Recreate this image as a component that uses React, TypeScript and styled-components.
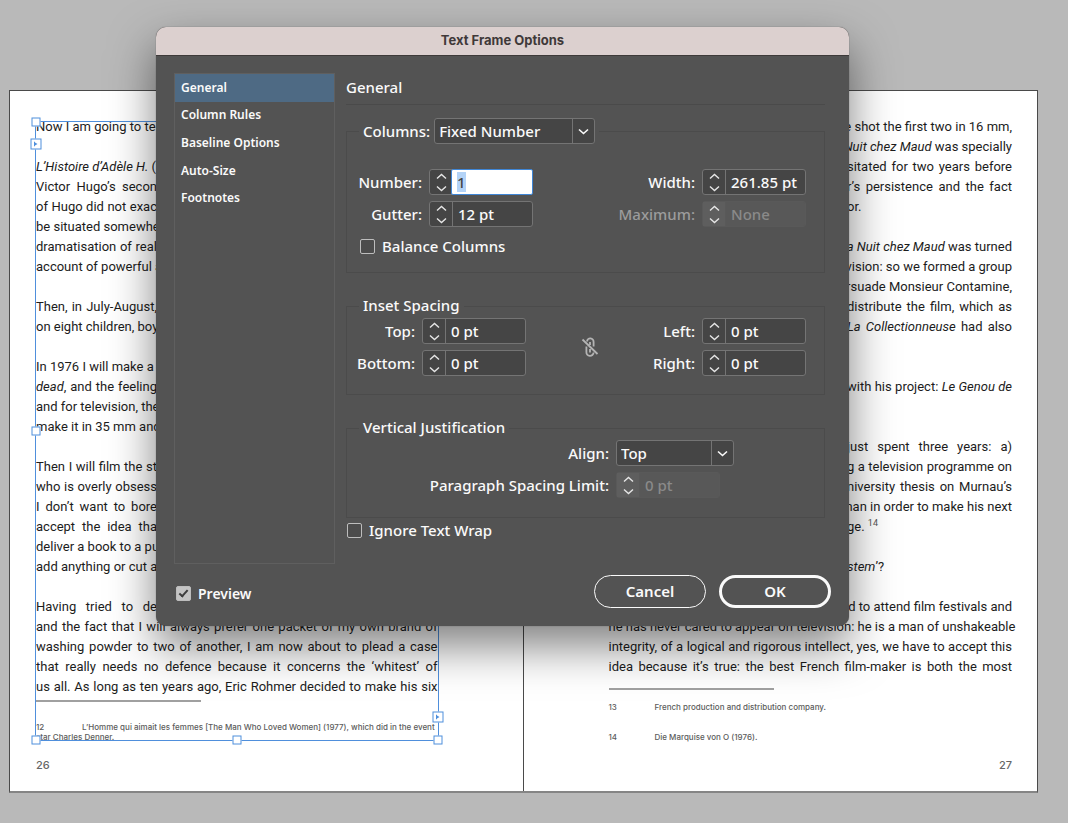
import React, { useEffect, useRef, useState } from "react";
import styled, { createGlobalStyle, css } from "styled-components";

const GlobalStyle = createGlobalStyle`
  *, *::before, *::after { box-sizing: border-box; }
  html, body, #root { min-height: 100vh; }
  body { margin: 0; background: #b9b9b9; }
  button, input, select { font: inherit; color: inherit; margin: 0; }
`;

const storyFont = `Roboto, sans-serif`;
const uiFont = `"Noto Sans", "Open Sans", sans-serif`;

/* ---------- document ---------- */

const Desk = styled.main`
  position: relative;
  min-height: 100vh;
  padding: 90px 30px 30px 9px;
`;

const Spread = styled.div`
  display: grid;
  grid-template-columns: minmax(0, 1fr) minmax(0, 1fr);
  min-height: 703px;
  background: #fff;
  border: 1px solid #4a4a4a;
  border-bottom: 2px solid #858585;
  font-family: ${storyFont};
  color: #1c1c1c;
`;

const Page = styled.article<{ $right?: boolean }>`
  display: flex;
  flex-direction: column;
  padding: ${(p) => (p.$right ? "26px 25px 18px 85px" : "26px 85px 18px 26px")};
  border-right: ${(p) => (p.$right ? "0" : "1px solid #4a4a4a")};
`;

const Frame = styled.div`
  position: relative;
  height: 623px;
`;

const Line = styled.p<{ $part?: "start" | "end"; $loose?: boolean }>`
  height: 20px;
  margin: 0;
  font-size: 13px;
  line-height: 20px;
  white-space: nowrap;
  text-align: left;
  text-align-last: ${(p) => (p.$loose ? "left" : "justify")};
  ${(p) => p.$part === "start" && css`width: 121px;`}
  ${(p) => p.$part === "end" && css`width: max-content; min-width: 165px; margin-left: auto;`}
`;

const NoteMark = styled.sup`
  font-size: 9px;
  line-height: 9px;
  color: #555;
`;

const NoteRule = styled.hr<{ $late?: boolean }>`
  width: 165px;
  height: 2px;
  margin: ${(p) => (p.$late ? "3px 0 20px" : "11px 0 12px")};
  border: 0;
  background: #a0a0a0;
`;

const Note = styled.p<{ $spaced?: boolean }>`
  margin: 0 0 ${(p) => (p.$spaced ? "20px" : "0")};
  font-family: Inter, sans-serif;
  font-size: 8px;
  font-weight: 500;
  line-height: 10px;
  color: #5c5c5c;
  white-space: nowrap;
`;

const NoteNumber = styled.span`
  display: inline-block;
  width: 46px;
`;

const Folio = styled.footer<{ $right?: boolean }>`
  margin-top: auto;
  font-family: Inter, sans-serif;
  font-size: 11px;
  font-weight: 500;
  line-height: 16px;
  color: #666;
  text-align: ${(p) => (p.$right ? "right" : "left")};
`;

const Selection = styled.div`
  position: absolute;
  inset: 4px -1px -1px -1px;
  border: 1px solid #4f8fdc;
  pointer-events: none;
`;

const Handle = styled.span<{ $x: string; $y: string; $port?: boolean }>`
  position: absolute;
  left: ${(p) => p.$x};
  top: ${(p) => p.$y};
  display: grid;
  place-items: center;
  width: ${(p) => (p.$port ? 11 : 9)}px;
  height: ${(p) => (p.$port ? 11 : 9)}px;
  transform: translate(-50%, -50%);
  border: 1px solid #4f8fdc;
  background: #fff;
`;

/* ---------- dialog ---------- */

const Overlay = styled.div`
  position: absolute;
  inset: 0;
  padding: 27px 0 0 156px;
`;

const Dialog = styled.section`
  width: 693px;
  overflow: hidden;
  border-radius: 10px;
  background: #535353;
  color: #fafafa;
  font-family: ${uiFont};
  font-size: 15px;
  font-weight: 500;
  line-height: 20px;
  box-shadow: 0 0 1px rgba(0, 0, 0, 0.6), 0 20px 46px rgba(0, 0, 0, 0.5);
`;

const TitleBar = styled.header`
  height: 29px;
  border-bottom: 1px solid #3e3a3a;
  background: #dcd0cf;
  color: #3f3939;
  font-family: Inter, sans-serif;
  font-size: 13px;
  font-weight: 700;
  line-height: 27px;
  text-align: center;
`;

const Title = styled.h1`
  margin: 0;
  font: inherit;
`;

const Body = styled.div`
  display: grid;
  grid-template-columns: 161px 1fr;
  column-gap: 11px;
  padding: 17px 24px 0 18px;
`;

const Sidebar = styled.nav`
  height: 491px;
  border: 1px solid #5f5f5f;
`;

const NavList = styled.ul`
  display: flex;
  flex-direction: column;
  height: 138px;
  margin: 0;
  padding: 0;
  list-style: none;
`;

const NavItem = styled.li`
  display: flex;
  flex: 1;
`;

const NavButton = styled.button<{ $active?: boolean }>`
  flex: 1;
  padding: 0 6px;
  border: 0;
  background: ${(p) => (p.$active ? "#4e6a84" : "transparent")};
  font-size: 12px;
  font-weight: 600;
  text-align: left;
`;

const Panel = styled.div`
  display: flex;
  flex-direction: column;
  align-items: stretch;
`;

const PanelTitle = styled.h2`
  height: 32px;
  margin: 0 0 13px;
  padding-top: 4px;
  border-bottom: 1px solid #4a4a4a;
  font: inherit;
`;

const Group = styled.fieldset<{ $height: number; $last?: boolean }>`
  min-width: 0;
  min-height: ${(p) => p.$height}px;
  margin: 0 0 ${(p) => (p.$last ? 2 : 23)}px;
  padding: 0 18px 0 0;
  border: 1px solid #4b4b4b;
`;

const Legend = styled.legend`
  display: flex;
  align-items: center;
  gap: 4px;
  margin-left: 12px;
  padding: 0 4px;
`;

const TextLegend = styled(Legend)`
  padding-bottom: 2px;
  line-height: 18px;
`;

const Columns = styled.div<{ $top: number }>`
  display: flex;
  align-items: center;
  justify-content: space-between;
  padding-top: ${(p) => p.$top}px;
`;

const Stack = styled.div<{ $top?: number }>`
  display: flex;
  flex-direction: column;
  align-items: flex-start;
  gap: 6px;
  padding-top: ${(p) => p.$top ?? 0}px;
`;

const FieldRow = styled.div<{ $labelWidth: number }>`
  display: grid;
  grid-template-columns: ${(p) => p.$labelWidth}px auto;
  column-gap: 7px;
  align-items: center;
`;

const FieldLabel = styled.label<{ $dim?: boolean }>`
  color: ${(p) => (p.$dim ? "#9c9c9c" : "inherit")};
  text-align: right;
  white-space: nowrap;
`;

const Stepper = styled.div<{ $dim?: boolean }>`
  display: flex;
  width: 104px;
  height: 26px;
  border: 1px solid ${(p) => (p.$dim ? "#595959" : "#747474")};
  border-radius: 3px;
  background: ${(p) => (p.$dim ? "#585858" : "#454545")};
  color: ${(p) => (p.$dim ? "#8a8a8a" : "inherit")};
`;

const Arrows = styled.div<{ $dim?: boolean }>`
  display: flex;
  flex-direction: column;
  width: 22px;
  background: ${(p) => (p.$dim ? "#5e5e5e" : "transparent")};
`;

const ArrowButton = styled.button`
  display: grid;
  flex: 1;
  place-items: center;
  padding: 0;
  border: 0;
  background: none;
  color: #e6e6e6;
`;

const ValueInput = styled.input<{ $active?: boolean; $dim?: boolean }>`
  flex: 1;
  min-width: 0;
  padding: 0 0 0 5px;
  border: 0;
  border-left: 1px solid ${(p) => (p.$dim ? "#595959" : "#747474")};
  background: transparent;
  outline: none;
  ${(p) =>
    p.$active &&
    css`
      margin: -1px;
      border: 1px solid #3f86d6;
      border-radius: 2px;
      background: #fff;
      color: #444;
      caret-color: transparent;
    `}
  &::selection {
    background: #b3d3f7;
    color: #444;
  }
`;

const SelectBox = styled.span<{ $width: number }>`
  position: relative;
  display: flex;
  width: ${(p) => p.$width}px;
  height: 26px;
`;

const NativeSelect = styled.select`
  width: 100%;
  padding: 0 26px 0 4px;
  appearance: none;
  border: 1px solid #747474;
  border-radius: 3px;
  background: #454545;
`;

const SelectArrow = styled.span`
  position: absolute;
  inset: 1px 1px 1px auto;
  display: grid;
  place-items: center;
  width: 22px;
  border-left: 1px solid #747474;
  pointer-events: none;
`;

const CheckLabel = styled.label<{ $indent?: number }>`
  display: inline-flex;
  align-items: center;
  gap: 7px;
  margin-left: ${(p) => p.$indent ?? 0}px;
`;

const CheckInput = styled.input`
  display: grid;
  place-items: center;
  width: 15px;
  height: 15px;
  appearance: none;
  border: 1px solid #bdbdbd;
  border-radius: 2px;
  background: #4c4c4c;
  &:checked {
    background: #c4c4c4;
  }
  &:checked::after {
    content: "";
    width: 5px;
    height: 9px;
    margin-bottom: 2px;
    border: solid #3d3d3d;
    border-width: 0 2px 2px 0;
    transform: rotate(42deg);
  }
`;

const LinkToggle = styled.button`
  display: grid;
  place-items: center;
  padding: 0;
  border: 0;
  background: none;
  color: #b4b4b4;
`;

const Actions = styled.footer`
  display: flex;
  align-items: center;
  gap: 13px;
  padding: 11px 18px 18px 20px;
`;

const PreviewLabel = styled(CheckLabel)`
  margin: 4px auto 0 0;
  font-size: 14px;
  font-weight: 600;
`;

const ActionButton = styled.button<{ $primary?: boolean }>`
  width: 112px;
  height: 33px;
  padding: 0 0 2px;
  border: ${(p) => (p.$primary ? 3 : 1)}px solid #fafafa;
  border-radius: 17px;
  background: transparent;
  font-weight: 600;
`;

const Chevron = ({ up, wide }: { up?: boolean; wide?: boolean }) => (
  <svg width="11" height="7" viewBox="0 0 11 7" fill="none" stroke="currentColor" strokeWidth={wide ? 1.6 : 1.4} aria-hidden>
    <path d={up ? "M1 5.5 5.5 1.5 10 5.5" : "M1 1.5 5.5 5.5 10 1.5"} />
  </svg>
);

const PortMark = () => (
  <svg width="5" height="5" viewBox="0 0 5 5" fill="#4f8fdc" aria-hidden>
    <path d="M.5 0h1v5h-1zM1.500 1l2.500 1.500-2.500 1.500z" />
  </svg>
);

const BrokenLink = () => (
  <svg width="18" height="20" viewBox="0 0 18 20" fill="none" stroke="currentColor" strokeWidth="1.8" aria-hidden>
    <path d="M6 4.500a3.200 3.200 0 0 1 6.600.500v4.500" />
    <path d="M5.400 9.500v5.500a3.600 3.600 0 0 0 7.200.500" />
    <path d="M9 5v3M9 12v3.500" />
    <path d="M1.500 2.500 16.500 17" />
  </svg>
);

type NumberFieldProps = {
  id: string;
  label: string;
  value: string;
  labelWidth: number;
  disabled?: boolean;
  dimLabel?: boolean;
  active?: boolean;
};

function NumberField({ id, label, value, labelWidth, disabled, dimLabel, active }: NumberFieldProps) {
  const [text, setText] = useState(value);
  const ref = useRef<HTMLInputElement>(null);

  useEffect(() => {
    if (active && ref.current) {
      ref.current.focus();
      ref.current.select();
    }
  }, [active]);

  const step = (by: number) =>
    setText((t) => t.replace(/^-?[\d.]+/, (n) => String(Math.max(0, Number(n) + by))));

  return (
    <FieldRow $labelWidth={labelWidth}>
      <FieldLabel htmlFor={id} $dim={dimLabel}>{label}</FieldLabel>
      <Stepper $dim={disabled}>
        <Arrows $dim={disabled}>
          <ArrowButton type="button" aria-label={`Increase ${id}`} disabled={disabled} onClick={() => step(1)}>
            <Chevron up />
          </ArrowButton>
          <ArrowButton type="button" aria-label={`Decrease ${id}`} disabled={disabled} onClick={() => step(-1)}>
            <Chevron />
          </ArrowButton>
        </Arrows>
        <ValueInput
          id={id}
          ref={ref}
          value={text}
          disabled={disabled}
          $active={active}
          $dim={disabled}
          onChange={(e) => setText(e.target.value)}
        />
      </Stepper>
    </FieldRow>
  );
}

function SelectField({ id, width, options }: { id: string; width: number; options: string[] }) {
  return (
    <SelectBox $width={width}>
      <NativeSelect id={id} defaultValue={options[0]}>
        {options.map((o) => (
          <option key={o}>{o}</option>
        ))}
      </NativeSelect>
      <SelectArrow>
        <Chevron wide />
      </SelectArrow>
    </SelectBox>
  );
}

type StoryLine = { text?: React.ReactNode; part?: "start" | "end"; loose?: boolean };

const s = (text: React.ReactNode): StoryLine => ({ text, part: "start" });
const e = (text: React.ReactNode, loose?: boolean): StoryLine => ({ text, part: "end", loose });
const gap: StoryLine = {};

const leftStory: StoryLine[] = [
  s("Now I am going to tell"),
  gap,
  s(<><i>L’Histoire d’Adèle H.</i> (w</>),
  s("Victor Hugo’s secon"),
  s("of Hugo did not exac"),
  s("be situated somewhe"),
  s("dramatisation of real"),
  s("account of powerful a"),
  gap,
  s("Then, in July-August,"),
  s("on eight children, boy"),
  gap,
  s("In 1976 I will make a fil"),
  s(<><i>dead</i>, and the feeling</>),
  s("and for television, the"),
  s("make it in 35 mm and"),
  gap,
  s("Then I will film the st"),
  s("who is overly obsess"),
  s("I don’t want to bore"),
  s("accept the idea tha"),
  s("deliver a book to a pu"),
  s("add anything or cut a"),
  gap,
  s("Having tried to de"),
  { text: "and the fact that I will always prefer one packet of my own brand of" },
  { text: "washing powder to two of another, I am now about to plead a case" },
  { text: "that really needs no defence because it concerns the ‘whitest’ of" },
  { text: "us all. As long as ten years ago, Eric Rohmer decided to make his six" },
];

const rightStory: StoryLine[] = [
  e("e shot the first two in 16 mm,"),
  e(<><i>Nuit chez Maud</i> was specially</>),
  e("sitated for two years before"),
  e("r’s persistence and the fact"),
  e("or.", true),
  gap,
  e(<><i>a Nuit chez Maud</i> was turned</>),
  e("vision: so we formed a group"),
  e("ersuade Monsieur Contamine,"),
  e("distribute the film, which as"),
  e(<><i>La Collectionneuse</i> had also</>),
  gap,
  gap,
  e(<>with his project: <i>Le Genou de</i></>),
  gap,
  gap,
  e("just spent three years: a)"),
  e("g a television programme on"),
  e("niversity thesis on Murnau’s"),
  e("man in order to make his next"),
  e(<>ge. <NoteMark>14</NoteMark></>, true),
  gap,
  e(<><i>stem</i>’?</>, true),
  gap,
  e("ed to attend film festivals and"),
  { text: "he has never cared to appear on television: he is a man of unshakeable" },
  { text: "integrity, of a logical and rigorous intellect, yes, we have to accept this" },
  { text: "idea because it’s true: the best French film-maker is both the most" },
];

const Story = ({ lines }: { lines: StoryLine[] }) => (
  <>
    {lines.map((line, i) => (
      <Line key={i} $part={line.part} $loose={line.loose}>
        {line.text}
      </Line>
    ))}
  </>
);

const sections = ["General", "Column Rules", "Baseline Options", "Auto-Size", "Footnotes"];

export default function App() {
  const [section, setSection] = useState("General");

  return (
    <>
      <GlobalStyle />
      <Desk>
        <Spread>
          <Page>
            <Frame>
              <Story lines={leftStory} />
              <NoteRule $late />
              <Note>
                <NoteNumber>12</NoteNumber>
                L’Homme qui aimait les femmes [The Man Who Loved Women] (1977), which did in the event
                <br />
                star Charles Denner.
              </Note>
              <Selection>
                <Handle $x="0%" $y="0%" />
                <Handle $x="0%" $y="22px" $port><PortMark /></Handle>
                <Handle $x="0%" $y="50%" />
                <Handle $x="0%" $y="100%" />
                <Handle $x="50%" $y="100%" />
                <Handle $x="100%" $y="100%" />
                <Handle $x="100%" $y="calc(100% - 23px)" $port><PortMark /></Handle>
              </Selection>
            </Frame>
            <Folio>26</Folio>
          </Page>
          <Page $right>
            <Frame>
              <Story lines={rightStory} />
              <NoteRule />
              <Note $spaced><NoteNumber>13</NoteNumber>French production and distribution company.</Note>
              <Note><NoteNumber>14</NoteNumber>Die Marquise von O (1976).</Note>
            </Frame>
            <Folio $right>27</Folio>
          </Page>
        </Spread>

        <Overlay>
          <Dialog role="dialog" aria-labelledby="dialog-title">
            <TitleBar>
              <Title id="dialog-title">Text Frame Options</Title>
            </TitleBar>
            <Body>
              <Sidebar>
                <NavList>
                  {sections.map((name) => (
                    <NavItem key={name}>
                      <NavButton type="button" $active={name === section} onClick={() => setSection(name)}>
                        {name}
                      </NavButton>
                    </NavItem>
                  ))}
                </NavList>
              </Sidebar>
              <Panel>
                <PanelTitle>General</PanelTitle>

                <Group $height={155}>
                  <Legend>
                    <label htmlFor="columns">Columns:</label>
                    <SelectField id="columns" width={161} options={["Fixed Number", "Fixed Width", "Flexible Width"]} />
                  </Legend>
                  <Columns $top={25}>
                    <Stack>
                      <NumberField id="number" label="Number:" value="1" labelWidth={75} active />
                      <NumberField id="gutter" label="Gutter:" value="12 pt" labelWidth={75} />
                    </Stack>
                    <Stack>
                      <NumberField id="width" label="Width:" value="261.85 pt" labelWidth={80} />
                      <NumberField id="maximum" label="Maximum:" value="None" labelWidth={80} disabled dimLabel />
                    </Stack>
                  </Columns>
                  <Stack $top={9}>
                    <CheckLabel $indent={13}>
                      <CheckInput type="checkbox" />
                      Balance Columns
                    </CheckLabel>
                  </Stack>
                </Group>

                <Group $height={99}>
                  <TextLegend>Inset Spacing</TextLegend>
                  <Columns $top={2}>
                    <Stack>
                      <NumberField id="top" label="Top:" value="0 pt" labelWidth={68} />
                      <NumberField id="bottom" label="Bottom:" value="0 pt" labelWidth={68} />
                    </Stack>
                    <LinkToggle type="button" aria-label="Make all settings the same">
                      <BrokenLink />
                    </LinkToggle>
                    <Stack>
                      <NumberField id="left" label="Left:" value="0 pt" labelWidth={42} />
                      <NumberField id="right" label="Right:" value="0 pt" labelWidth={42} />
                    </Stack>
                  </Columns>
                </Group>

                <Group $height={100} $last>
                  <TextLegend>Vertical Justification</TextLegend>
                  <Stack $top={2}>
                    <FieldRow $labelWidth={262}>
                      <FieldLabel htmlFor="align">Align:</FieldLabel>
                      <SelectField id="align" width={118} options={["Top", "Center", "Bottom", "Justify"]} />
                    </FieldRow>
                    <NumberField id="limit" label="Paragraph Spacing Limit:" value="0 pt" labelWidth={262} disabled />
                  </Stack>
                </Group>
                <CheckLabel $indent={1}>
                  <CheckInput type="checkbox" />
                  Ignore Text Wrap
                </CheckLabel>
              </Panel>
            </Body>
            <Actions>
              <PreviewLabel>
                <CheckInput type="checkbox" defaultChecked />
                Preview
              </PreviewLabel>
              <ActionButton type="button">Cancel</ActionButton>
              <ActionButton type="button" $primary>OK</ActionButton>
            </Actions>
          </Dialog>
        </Overlay>
      </Desk>
    </>
  );
}
